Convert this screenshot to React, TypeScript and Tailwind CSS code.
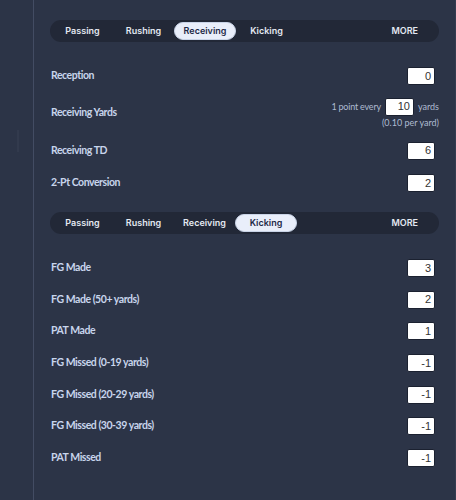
import React from "react";

const tabs = ["Passing", "Rushing", "Receiving", "Kicking"];
const tabFont = { fontFamily: "Inter, 'Open Sans', sans-serif" };

function TabBar({ active }: { active: string }) {
  return (
    <div className="flex h-[22px] w-[389px] items-center rounded-full bg-[#222837] pl-[2px] pr-[21px]">
      {tabs.map((t) =>
        t === active ? (
          <div
            key={t}
            className="flex h-[18px] w-[62px] items-center justify-center rounded-full border border-[#c9d3e6] bg-[#e9eefa] text-[9px] font-semibold text-[#1f2a47]"
            style={tabFont}
          >
            {t}
          </div>
        ) : (
          <div
            key={t}
            className="flex h-[18px] w-[61px] items-center justify-center text-[9px] font-semibold text-[#e4e9f2]"
            style={tabFont}
          >
            {t}
          </div>
        )
      )}
      <div className="ml-auto text-[9px] font-semibold text-[#e4e9f2]" style={tabFont}>
        MORE
      </div>
    </div>
  );
}

function NumBox({ value, w = "w-[28px]" }: { value: string; w?: string }) {
  return (
    <div
      className={`flex h-[18px] ${w} items-center justify-end rounded-[2px] border border-[#1b2130] bg-white pr-[3px] text-[11px] text-[#333]`}
      style={{ fontFamily: "'Liberation Sans', Arial, sans-serif" }}
    >
      {value}
    </div>
  );
}

function Row({ label, value, h }: { label: string; value: string; h: string }) {
  return (
    <div className={`flex ${h} items-center justify-between pl-[1px] pr-[4px]`}>
      <span className="text-[10.5px] font-bold tracking-[-0.45px] text-[#c8d5ec]">{label}</span>
      <NumBox value={value} />
    </div>
  );
}

export default function App() {
  return (
    <div
      className="flex h-[500px] w-[456px] bg-[#2c3447]"
      style={{ fontFamily: "Lato, 'Open Sans', sans-serif" }}
    >
      <div className="relative w-[34px] shrink-0 border-r border-[#434c63]">
        <div className="absolute left-[17px] top-[130px] h-[22px] w-[2px] bg-[#323a4d]" />
      </div>
      <div className="flex flex-1 flex-col border-r border-[#343c50] pl-[16px]">
        <div className="mt-[20px]">
          <TabBar active="Receiving" />
        </div>
        <div className="mt-[18px] w-[389px]">
          <Row label="Reception" value="0" h="h-[32px]" />
          <div className="flex h-[42px] items-center justify-between pl-[1px]">
            <span className="text-[10.5px] font-bold tracking-[-0.45px] text-[#c8d5ec]">Receiving Yards</span>
            <div className="flex flex-col items-end">
              <div className="flex items-center gap-[4px]">
                <span className="text-[9px] tracking-[-0.2px] text-[#aebbd1]">1 point every</span>
                <NumBox value="10" w="w-[29px]" />
                <span className="text-[9px] text-[#aebbd1]">yards</span>
              </div>
              <span className="text-[9px] leading-[13px] text-[#aebbd1]">(0.10 per yard)</span>
            </div>
          </div>
          <Row label="Receiving TD" value="6" h="h-[33px]" />
          <Row label="2-Pt Conversion" value="2" h="h-[32px]" />
        </div>
        <div className="mt-[13px]">
          <TabBar active="Kicking" />
        </div>
        <div className="mt-[18px] w-[389px]">
          <Row label="FG Made" value="3" h="h-[31.7px]" />
          <Row label="FG Made (50+ yards)" value="2" h="h-[31.7px]" />
          <Row label="PAT Made" value="1" h="h-[31.7px]" />
          <Row label="FG Missed (0-19 yards)" value="-1" h="h-[31.7px]" />
          <Row label="FG Missed (20-29 yards)" value="-1" h="h-[31.7px]" />
          <Row label="FG Missed (30-39 yards)" value="-1" h="h-[31.7px]" />
          <Row label="PAT Missed" value="-1" h="h-[31.7px]" />
        </div>
      </div>
    </div>
  );
}
